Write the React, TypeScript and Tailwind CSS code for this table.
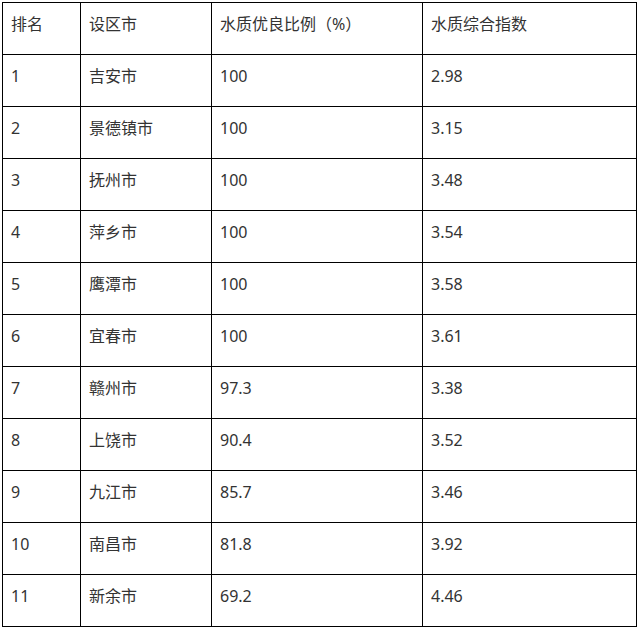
import React from 'react';

interface Row {
  rank: string;
  city: string;
  ratio: string;
  index: string;
}

const rows: Row[] = [
  { rank: '1', city: '吉安市', ratio: '100', index: '2.98' },
  { rank: '2', city: '景德镇市', ratio: '100', index: '3.15' },
  { rank: '3', city: '抚州市', ratio: '100', index: '3.48' },
  { rank: '4', city: '萍乡市', ratio: '100', index: '3.54' },
  { rank: '5', city: '鹰潭市', ratio: '100', index: '3.58' },
  { rank: '6', city: '宜春市', ratio: '100', index: '3.61' },
  { rank: '7', city: '赣州市', ratio: '97.3', index: '3.38' },
  { rank: '8', city: '上饶市', ratio: '90.4', index: '3.52' },
  { rank: '9', city: '九江市', ratio: '85.7', index: '3.46' },
  { rank: '10', city: '南昌市', ratio: '81.8', index: '3.92' },
  { rank: '11', city: '新余市', ratio: '69.2', index: '4.46' }
];

const cell = 'border border-black h-[52px] align-top pl-[8px] pt-[9px] leading-[24px]';

export default function App() {
  return (
    <div
      className="bg-white w-[639px] h-[631px] pt-[2px] pl-[2px] text-[16px] text-[#333]"
      style={{ fontFamily: '"Noto Sans", "Noto Sans CJK SC", sans-serif' }}
    >
      <table className="border-collapse table-fixed w-[634px]">
        <colgroup>
          <col className="w-[78px]" />
          <col className="w-[131px]" />
          <col className="w-[211px]" />
          <col className="w-[214px]" />
        </colgroup>
        <thead>
          <tr>
            <th className={`${cell} text-left font-normal`}>排名</th>
            <th className={`${cell} text-left font-normal`}>设区市</th>
            <th className={`${cell} text-left font-normal`}>水质优良比例（%）</th>
            <th className={`${cell} text-left font-normal`}>水质综合指数</th>
          </tr>
        </thead>
        <tbody>
          {rows.map((r) => (
            <tr key={r.rank}>
              <td className={cell}>{r.rank}</td>
              <td className={cell}>{r.city}</td>
              <td className={cell}>{r.ratio}</td>
              <td className={cell}>{r.index}</td>
            </tr>
          ))}
        </tbody>
      </table>
    </div>
  );
}
